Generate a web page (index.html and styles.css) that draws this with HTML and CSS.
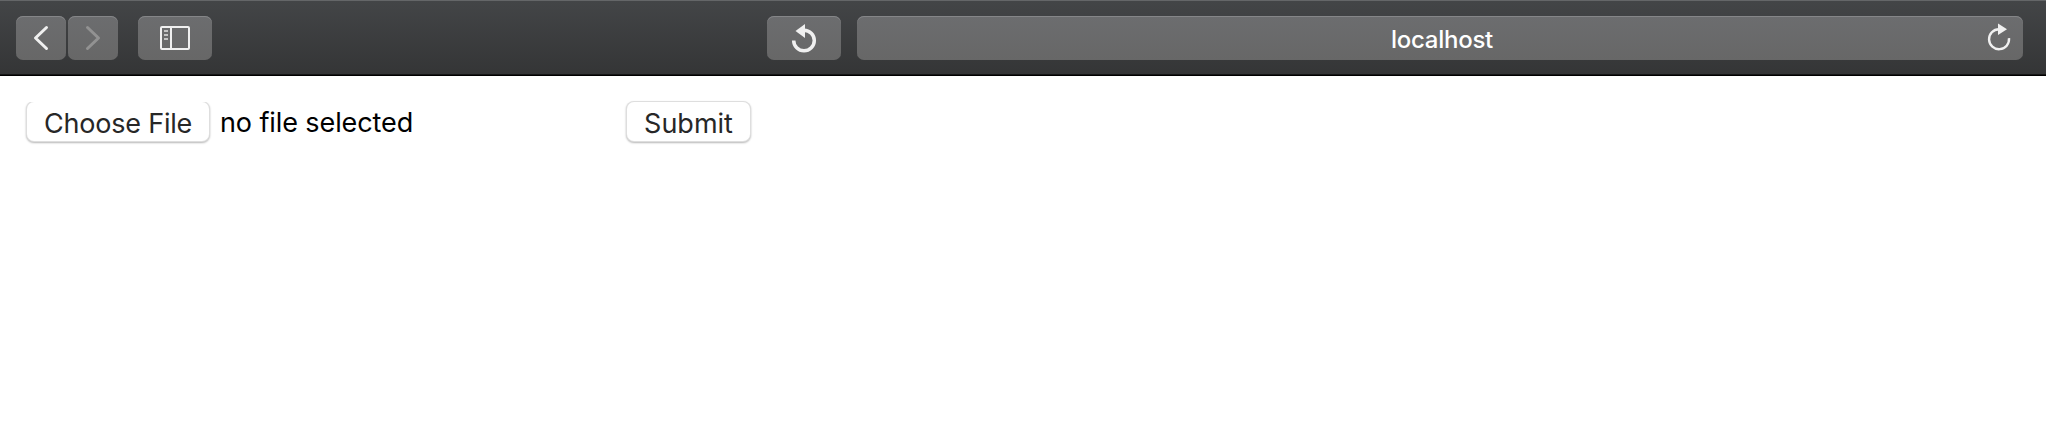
FILE: index.html
```html
<!DOCTYPE html>
<html lang="en">
<head>
<meta charset="utf-8">
<title>localhost</title>
<link rel="stylesheet" href="styles.css">
</head>
<body>
<header class="toolbar">
  <button class="tool nav" aria-label="Back"><svg width="50" height="44" viewBox="0 0 50 44"><path d="M30.500 11.500L19.500 22L30.500 32.500" class="chevron"/></svg></button>
  <button class="tool nav forward" aria-label="Forward"><svg width="50" height="44" viewBox="0 0 50 44"><path d="M19.500 11.500L30.500 22L19.500 32.500" class="chevron"/></svg></button>
  <button class="tool wide sidebar" aria-label="Sidebar"><svg width="74" height="44" viewBox="0 0 74 44"><rect x="23" y="11" width="28" height="22" rx="1" class="frame"/><path d="M33 11V33" class="frame"/><path d="M26 15H30M26 19H30M26 23H30" class="lines"/></svg></button>
  <button class="tool wide reload" aria-label="Reload"><svg width="74" height="44" viewBox="0 0 74 44"><path d="M26.700 24.500A10.300 10.300 0 1 0 37 14.200" class="arc"/><path d="M38 8V22L28.500 15Z" class="head"/></svg></button>
  <div class="tool address"><span class="host">localhost</span><svg class="refresh" width="50" height="44" viewBox="0 0 50 44"><path d="M36 22.200A10 10 0 1 1 26 13.200" class="ring"/><path d="M25 7.500V19L34 13.300Z" class="head"/></svg></div>
</header>
<main class="page">
  <form class="form">
    <button type="button" class="button choose">Choose File</button>
    <span class="status">no file selected</span>
    <button type="button" class="button submit">Submit</button>
  </form>
</main>
</body>
</html>
```
FILE: styles.css
```css
* { box-sizing: border-box; }
body { margin: 0; background: #fff; font-family: Inter, "Liberation Sans", sans-serif; }
svg { display: block; }
.toolbar {
  display: flex;
  height: 76px;
  padding: 15px 23px 0 16px;
  background: linear-gradient(#434547, #343536);
  border-top: 1px solid #646668;
  border-bottom: 1px solid #000;
  box-shadow: inset 0 -1px #161616;
}
.tool {
  height: 44px;
  flex: none;
  padding: 0;
  border: 0;
  border-radius: 7px;
  background: linear-gradient(#6c6d6f, #676767);
  box-shadow: inset 0 1px #858688;
}
.nav { width: 50px; }
.wide { width: 74px; }
.forward { margin-left: 2px; }
.forward .chevron { stroke: #929292; }
.sidebar { margin-left: 20px; }
.reload { margin-left: 555px; }
.address { position: relative; display: flex; flex: 1; margin-left: 16px; align-items: center; justify-content: center; }
.host { padding: 3px 0 0 4px; color: #fff; font-size: 24px; font-weight: 500; line-height: 44px; letter-spacing: -0.25px; white-space: nowrap; }
.refresh { position: absolute; top: 0; right: 0; }
.chevron, .frame, .lines, .arc, .ring { fill: none; stroke: #f0f0f0; }
.chevron { stroke-width: 3; stroke-linecap: round; stroke-linejoin: round; }
.frame { stroke-width: 2; }
.lines { stroke: #c4c4c4; stroke-width: 2; }
.arc { stroke-width: 3.5; }
.ring { stroke-width: 2.4; }
.head { fill: #f0f0f0; }
.page { padding: 26px 27px; }
.form { display: flex; width: 723px; align-items: flex-start; }
.button {
  height: 39px;
  padding: 3px 0 0;
  border: 0;
  border-radius: 7px;
  background: #fff;
  color: #272727;
  font: 27px/36px Inter, "Liberation Sans", sans-serif;
  white-space: nowrap;
  box-shadow: 0 0 0 1px #dedede, 0 1px 2px 1px #b8b8b8;
}
.button { padding-top: 4px; line-height: 35px; }
.choose { width: 182px; letter-spacing: -0.2px; clip-path: inset(0 -4px -5px -4px); }
.status { margin-left: 11px; padding-top: 2px; color: #000; font-size: 27px; line-height: 38px; letter-spacing: -0.1px; white-space: nowrap; }
.submit { width: 123px; margin-left: auto; letter-spacing: 0; }
```
